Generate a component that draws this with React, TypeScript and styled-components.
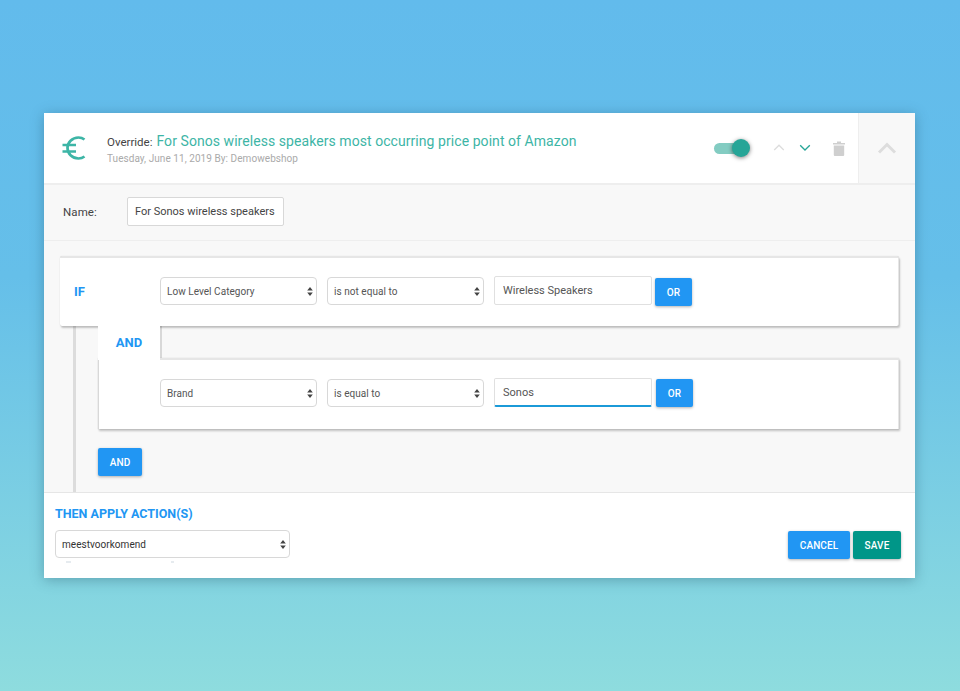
import React from 'react';
import styled, { createGlobalStyle } from 'styled-components';

const GlobalStyle = createGlobalStyle`
  html, body {
    margin: 0;
    padding: 0;
  }
  * {
    box-sizing: border-box;
  }
  body {
    font-family: Roboto, 'Liberation Sans', sans-serif;
  }
`;

const Page = styled.div`
  height: 691px;
  overflow: hidden;
  padding: 113px 45px 0 44px;
  background: linear-gradient(180deg, #62bbec 0%, #65bfe9 40%, #8edcde 100%);
`;

const Card = styled.div`
  height: 465px;
  display: flex;
  flex-direction: column;
  background: #fff;
  box-shadow: 0 2px 12px rgba(30, 70, 90, 0.35);
`;

const Header = styled.header`
  display: flex;
  align-items: stretch;
  height: 72px;
  flex-shrink: 0;
  border-bottom: 2px solid #eeeeee;
`;

const EuroBox = styled.div`
  width: 63px;
  padding-left: 18px;
  display: flex;
  align-items: center;
  color: #3db5a6;
`;

const TitleBlock = styled.div`
  flex: 1;
  padding-top: 19px;
`;

const TitleLine = styled.div`
  display: flex;
  align-items: baseline;
  gap: 4px;
  font-size: 11.5px;
  line-height: 18px;
  color: #444;
`;

const TitleName = styled.span`
  font-size: 14px;
  letter-spacing: 0.06px;
  color: #3db5a6;
`;

const SubLine = styled.div`
  font-size: 10px;
  line-height: 14px;
  letter-spacing: 0.06px;
  margin-top: 1px;
  color: #aaaaaa;
`;

const Controls = styled.div`
  display: flex;
  align-items: center;
`;

const Toggle = styled.div`
  position: relative;
  width: 33px;
  height: 11px;
  margin-right: 26px;
  border-radius: 6px;
  background: #83ccc2;
`;

const Knob = styled.div`
  position: absolute;
  top: -3.5px;
  right: -3px;
  width: 18px;
  height: 18px;
  border-radius: 50%;
  background: #26a597;
  box-shadow: 0 1px 4px rgba(0, 0, 0, 0.5);
`;

const Arrow = styled.svg<{ $gap: number }>`
  display: block;
  margin-right: ${(p) => p.$gap}px;
  fill: none;
  stroke-width: 2.2;
`;

const TrashIcon = styled.svg`
  display: block;
  margin-right: 13px;
  fill: #cfcfcf;
`;

const CollapseBox = styled.div`
  width: 57px;
  display: flex;
  align-items: center;
  justify-content: center;
  background: #f8f8f8;
  border-left: 1px solid #eeeeee;
`;

const NameRow = styled.div`
  display: flex;
  align-items: center;
  height: 56px;
  flex-shrink: 0;
  padding: 0 0 2px 19px;
  background: #f8f8f8;
  border-bottom: 1px solid #eeeeee;
`;

const NameLabel = styled.label`
  width: 64px;
  font-size: 11.5px;
  letter-spacing: 0.1px;
  color: #444;
`;

const NameInput = styled.input`
  width: 157px;
  height: 29px;
  padding: 0 7px;
  border: 1px solid #d8d8d8;
  border-radius: 2px;
  background: #fff;
  font-family: inherit;
  font-size: 11px;
  color: #444;
  outline: none;
`;

const Conditions = styled.div`
  flex: 1;
  padding: 15px 16px 0;
  background: #f8f8f8;
  border-bottom: 1px solid #e6e6e6;
`;

const Block = styled.div`
  position: relative;
  z-index: 1;
  display: flex;
  align-items: center;
  height: 70px;
  padding-bottom: 2px;
  background: #fff;
  border-top: 2px solid #e6e6e6;
  border-right: 1px solid #e6e6e6;
  border-radius: 2px;
  box-shadow: 0 0 1px rgba(0, 0, 0, 0.18), 1px 2px 2px rgba(0, 0, 0, 0.22);
`;

const IfLabel = styled.div`
  width: 100px;
  padding-left: 14px;
  font-size: 13px;
  font-weight: 700;
  color: #2196f3;
`;

const Rail = styled.div`
  margin-left: 13px;
  padding: 0 0 16px 22px;
  border-left: 3px solid #dcdcdc;
`;

const AndRow = styled.div`
  display: flex;
  height: 32px;
`;

const AndTab = styled.div`
  width: 62px;
  height: 34px;
  position: relative;
  z-index: 2;
  display: flex;
  align-items: center;
  justify-content: center;
  padding-bottom: 2px;
  background: #fff;
  font-size: 13px;
  font-weight: 700;
  color: #2196f3;
`;

const AndGap = styled.div`
  flex: 1;
  border-left: 2px solid #d8d8d8;
`;

const Group = styled(Block)`
  height: 71px;
  padding: 0 0 3px 61px;
  border-left: 1px solid #d8d8d8;
  border-radius: 0;
`;

const AddRow = styled.div`
  margin-top: 19px;
`;

const SelectWrap = styled.div<{ $width: number }>`
  position: relative;
  width: ${(p) => p.$width}px;
  height: 28px;
  margin-right: 10px;
`;

const Select = styled.select<{ $dark?: boolean }>`
  width: 100%;
  height: 100%;
  padding: 0 20px 0 6px;
  appearance: none;
  border: 1px solid #d8d8d8;
  border-radius: 4px;
  background: #fff;
  font-family: inherit;
  font-size: 10px;
  letter-spacing: 0.04px;
  color: ${(p) => (p.$dark ? '#333' : '#555')};
  outline: none;
`;

const SelectArrows = styled.svg`
  position: absolute;
  top: 10px;
  right: 4px;
  fill: #444;
  pointer-events: none;
`;

// tops of a line of text that the footer cuts off under the action select
const CutMark = styled.div<{ $left: number; $width: number }>`
  position: absolute;
  top: 31px;
  left: ${(p) => p.$left}px;
  width: ${(p) => p.$width}px;
  height: 2px;
  background: #e6ebef;
`;

const ValueInput = styled.input<{ $active?: boolean }>`
  width: 158px;
  height: 29px;
  margin-top: -1px;
  padding: 0 8px;
  border: 1px solid #e0e0e0;
  border-bottom: ${(p) => (p.$active ? '2px solid #1b9ad8' : '1px solid #e0e0e0')};
  border-radius: 2px;
  background: #fff;
  font-family: inherit;
  font-size: 11px;
  color: #555;
  outline: none;
`;

const Button = styled.button<{ $color?: string; $width: number; $left?: number; $top?: number }>`
  width: ${(p) => p.$width}px;
  height: 28px;
  margin-left: ${(p) => p.$left ?? 0}px;
  margin-top: ${(p) => p.$top ?? 0}px;
  padding: 0;
  border: none;
  border-radius: 2px;
  background: ${(p) => p.$color ?? '#2196f3'};
  box-shadow: 0 1px 3px rgba(0, 0, 0, 0.3);
  font-family: inherit;
  font-size: 10px;
  font-weight: 500;
  letter-spacing: 0.1px;
  color: #fff;
`;

const Footer = styled.footer`
  display: flex;
  justify-content: space-between;
  align-items: flex-end;
  height: 85px;
  flex-shrink: 0;
  padding: 0 14px 20px 11px;
`;

const ActionTitle = styled.div`
  margin-bottom: 8px;
  font-size: 12.5px;
  line-height: 16px;
  font-weight: 700;
  color: #2196f3;
`;

const ActionButtons = styled.div`
  display: flex;
  margin-bottom: -1px;
`;

const Chevron = ({ color, width, gap, down }: { color: string; width: number; gap: number; down?: boolean }) => (
  <Arrow $gap={gap} width={width} height={width * 0.6} viewBox="0 0 20 12" stroke={color}>
    <path d={down ? 'M2 2l8 8 8-8' : 'M2 10l8-8 8 8'} />
  </Arrow>
);

const UpDown = () => (
  <SelectArrows width="6" height="9" viewBox="0 0 6 9">
    <path d="M3 0L5.800 3.600H.2zM3 9L.2 5.400H5.800z" />
  </SelectArrows>
);

const Dropdown = ({
  value,
  width = 157,
  dark,
  children,
}: {
  value: string;
  width?: number;
  dark?: boolean;
  children?: React.ReactNode;
}) => (
  <SelectWrap $width={width}>
    <Select $dark={dark} defaultValue={value}>
      <option>{value}</option>
    </Select>
    <UpDown />
    {children}
  </SelectWrap>
);

export default function App() {
  return (
    <Page>
      <GlobalStyle />
      <Card>
        <Header>
          <EuroBox>
            <svg width="24" height="24" viewBox="0 0 24 24" fill="none" stroke="currentColor" strokeWidth="2.7">
              <path d="M22.500 3.500C20.500 2 18.500 1.500 16.500 1.500 10 1.500 5.500 6.500 5.500 12s4.500 10.500 11 10.500c2 0 4-.5 6-2" />
              <path d="M0.500 9h13.500M0.500 15.500h13.500" />
            </svg>
          </EuroBox>
          <TitleBlock>
            <TitleLine>
              <span>Override:</span>
              <TitleName>For Sonos wireless speakers most occurring price point of Amazon</TitleName>
            </TitleLine>
            <SubLine>Tuesday, June 11, 2019 By: Demowebshop</SubLine>
          </TitleBlock>
          <Controls>
            <Toggle>
              <Knob />
            </Toggle>
            <Chevron color="#dddddd" width={12} gap={14} />
            <Chevron color="#26a597" width={12} gap={22} down />
            <TrashIcon width="12" height="15" viewBox="0 0 12 15">
              <path d="M0 2h4V.500h4V2h4v1.500H0zM.800 4.500h10.400V14a1 1 0 0 1-1 1H1.800a1 1 0 0 1-1-1z" />
            </TrashIcon>
          </Controls>
          <CollapseBox>
            <svg width="20" height="12" viewBox="0 0 20 12" fill="none" stroke="#dddddd" strokeWidth="3">
              <path d="M2 10.500l8-8 8 8" />
            </svg>
          </CollapseBox>
        </Header>

        <NameRow>
          <NameLabel>Name:</NameLabel>
          <NameInput readOnly value="For Sonos wireless speakers" />
        </NameRow>

        <Conditions>
          <Block>
            <IfLabel>IF</IfLabel>
            <Dropdown value="Low Level Category" />
            <Dropdown value="is not equal to" />
            <ValueInput readOnly value="Wireless Speakers" />
            <Button $width={37} $left={3} $top={2}>OR</Button>
          </Block>
          <Rail>
            <AndRow>
              <AndTab>AND</AndTab>
              <AndGap />
            </AndRow>
            <Group>
              <Dropdown value="Brand" />
              <Dropdown value="is equal to" />
              <ValueInput $active readOnly value="Sonos" />
              <Button $width={37} $left={4}>OR</Button>
            </Group>
            <AddRow>
              <Button $width={44}>AND</Button>
            </AddRow>
          </Rail>
        </Conditions>

        <Footer>
          <div>
            <ActionTitle>THEN APPLY ACTION(S)</ActionTitle>
            <Dropdown value="meestvoorkomend" width={235} dark>
              <CutMark $left={11} $width={5} />
              <CutMark $left={116} $width={3} />
            </Dropdown>
          </div>
          <ActionButtons>
            <Button $width={62}>CANCEL</Button>
            <Button $width={48} $left={3} $color="#009688">SAVE</Button>
          </ActionButtons>
        </Footer>
      </Card>
    </Page>
  );
}
